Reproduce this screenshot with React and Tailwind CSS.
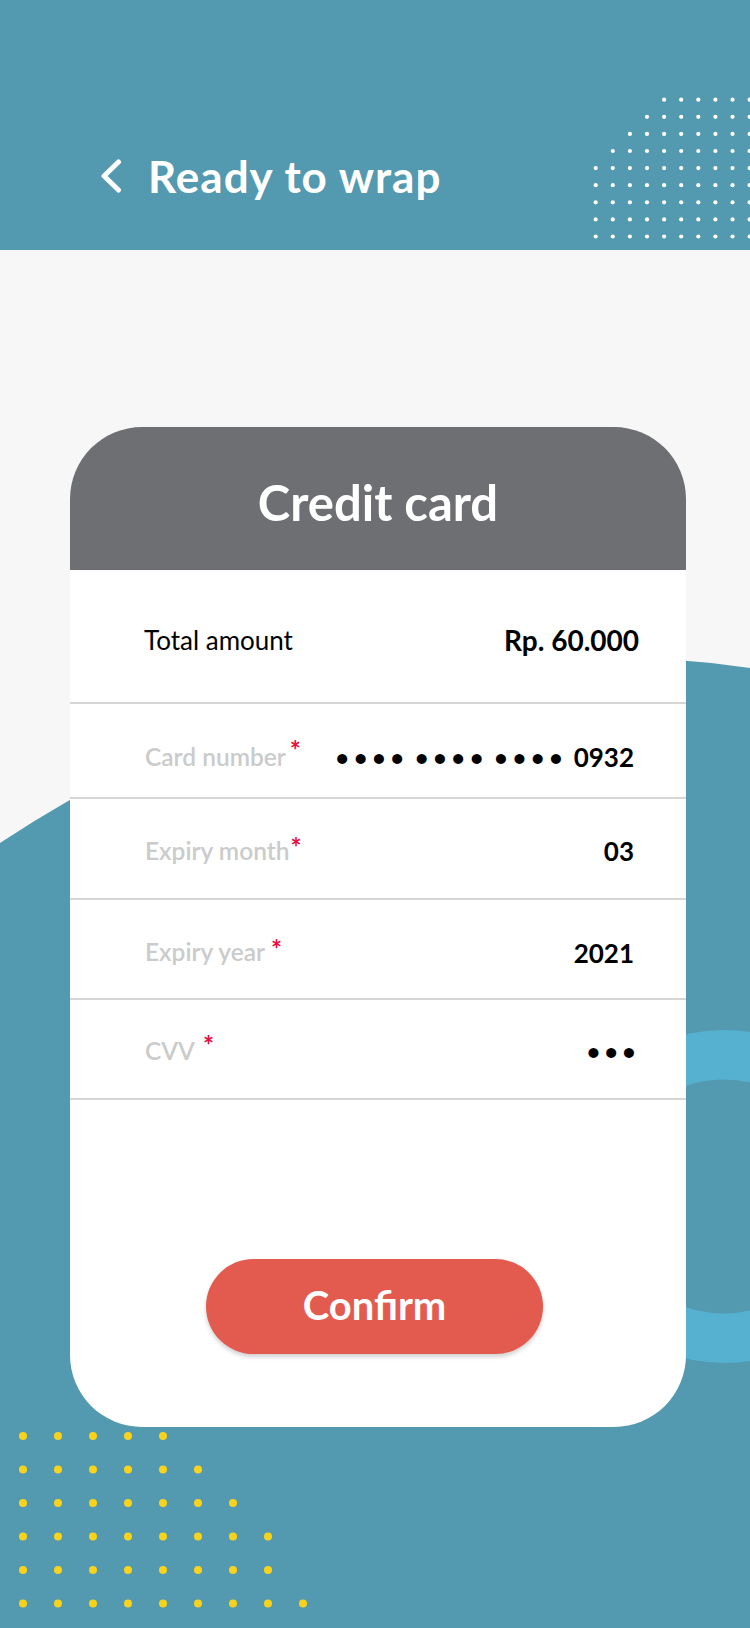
import React from "react";

const WHITE_ROWS = [4, 3, 2, 1, 0, 0, 0, 0, 0];
const YELLOW_ROWS = [5, 6, 7, 8, 8, 9];

function HeaderDots() {
  const dots = [];
  WHITE_ROWS.forEach((start, r) => {
    for (let c = start; c < 10; c++) {
      dots.push(
        <circle key={`${r}-${c}`} cx={35.7 + 17.1 * c} cy={99.7 + 17.1 * r} r="2.1" fill="#ffffff" />
      );
    }
  });
  return (
    <svg className="absolute left-[560px] top-0" width="190" height="250" viewBox="0 0 190 250">
      {dots}
    </svg>
  );
}

function Background() {
  const dots = [];
  YELLOW_ROWS.forEach((count, r) => {
    for (let c = 0; c < count; c++) {
      dots.push(
        <circle key={`${r}-${c}`} cx={23 + 35 * c} cy={1436 + 33.5 * r} r="4" fill="#f9d21c" />
      );
    }
  });
  return (
    <svg className="absolute left-0 top-0" width="750" height="1628" viewBox="0 0 750 1628">
      <path d="M0 843 Q352.5 610.3 750 668 L750 1628 L0 1628 Z" fill="#5399af" />
      <circle cx="724" cy="1196.5" r="141.75" fill="none" stroke="#55b1cf" strokeWidth="49.5" />
      {dots}
    </svg>
  );
}

function Star({ className }) {
  return <span className={`relative text-[26px] leading-none text-[#ea0c3e] font-bold ${className}`}>*</span>;
}

function Row({ label, star, value, h, pt }) {
  return (
    <div className={`flex items-center justify-between border-b-2 border-[#d6d6d6] pl-[75px] pr-[52px] ${h} ${pt}`}>
      <div className="flex items-center whitespace-nowrap">
        <span className="text-[24.5px] font-semibold text-[#cbcbcb] leading-none">{label}</span>
        {star}
      </div>
      <div className="flex items-center text-[26px] font-bold text-black leading-none whitespace-nowrap">{value}</div>
    </div>
  );
}

export default function App() {
  return (
    <div className="relative w-[750px] h-[1628px] overflow-hidden bg-[#f7f7f7] font-['Lato',sans-serif]">
      <Background />

      <header className="relative h-[250px] bg-[#5399af] flex items-center pl-[100px] pt-[155px] pb-[53px]">
        <HeaderDots />
        <svg width="22" height="34" viewBox="0 0 22 34" className="relative">
          <path d="M18.5 3 L4 17 L18.5 31" fill="none" stroke="#ffffff" strokeWidth="5" strokeLinecap="round" strokeLinejoin="round" />
        </svg>
        <h1 className="relative ml-[26px] text-[44px] tracking-[1px] font-bold text-white leading-none">Ready to wrap</h1>
      </header>

      <div className="relative mt-[177px] ml-[70px] w-[616px] h-[1000px] rounded-[72px] overflow-hidden bg-white flex flex-col">
        <div className="h-[143px] shrink-0 bg-[#6e6f73] flex items-center justify-center pt-[8px]">
          <h2 className="text-[49px] font-bold text-white leading-none">Credit card</h2>
        </div>

        <div className="h-[134px] shrink-0 flex items-center justify-between border-b-2 border-[#d6d6d6] pl-[74px] pr-[47px] pt-[8px]">
          <span className="text-[26px] text-black leading-none">Total amount</span>
          <span className="text-[28px] font-bold text-black leading-none">Rp. 60.000</span>
        </div>

        <Row
          h="h-[95px]"
          pt="pt-[13px]"
          label="Card number"
          star={<Star className="-top-[7px] ml-[4px]" />}
          value={
            <>
              <span className="text-[23px] tracking-[5px]">••••</span>
              <span className="text-[23px] tracking-[5px] ml-[6px]">••••</span>
              <span className="text-[23px] tracking-[5px] ml-[6px]">••••</span>
              <span className="ml-[6px]">0932</span>
            </>
          }
        />
        <Row
          h="h-[101px]"
          pt="pt-[5px]"
          label="Expiry month"
          star={<Star className="-top-[4px] ml-[1px]" />}
          value="03"
        />
        <Row
          h="h-[100px]"
          pt="pt-[7px]"
          label="Expiry year"
          star={<Star className="-top-[4px] ml-[6px]" />}
          value="2021"
        />
        <Row
          h="h-[100px]"
          pt="pt-[5px]"
          label="CVV"
          star={<Star className="-top-[7px] ml-[8px]" />}
          value={<span className="text-[23px] tracking-[4.4px] mr-[-6px]">•••</span>}
        />

        <div className="flex-1 pt-[159px]">
          <button className="ml-[136px] w-[337px] h-[95px] rounded-full bg-[#e35a4f] text-white text-[40px] font-bold leading-none shadow-[0_3px_4px_rgba(0,0,0,0.18)] pb-[4px]">
            Confirm
          </button>
        </div>
      </div>
    </div>
  );
}
